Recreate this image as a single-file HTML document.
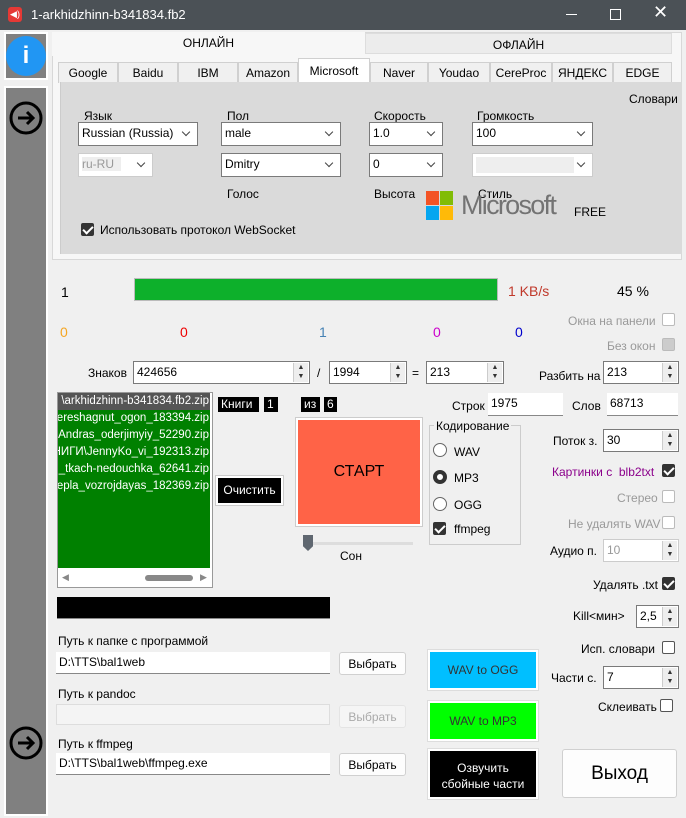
<!DOCTYPE html><html><head><meta charset="utf-8"><style>
*{box-sizing:border-box;margin:0;padding:0}
body{width:686px;height:818px;overflow:hidden;background:#f0f0f0;font-family:"Liberation Sans",sans-serif;font-size:12px;color:#000;position:relative}
.a{position:absolute;white-space:nowrap}
.in{position:absolute;background:#fff;border:1px solid #7a7a7a;padding:3px 3px;font-size:12px}
.cb{position:absolute;width:13px;height:13px;border:1px solid #555;background:#fff;border-radius:2px}
.cb.on{background:#333;border-color:#333}
.cb.on:after{content:"";position:absolute;left:3px;top:0px;width:4px;height:8px;border:solid #fff;border-width:0 2px 2px 0;transform:rotate(45deg)}
.cb.dis{border-color:#bbb}
.dd:after{content:"";position:absolute;right:8px;top:6px;width:5px;height:5px;border:solid #444;border-width:0 1px 1px 0;transform:rotate(45deg)}
.sp:after{content:"▲\A▼";white-space:pre;position:absolute;right:1px;top:1px;font-size:7px;line-height:9px;width:14px;text-align:center;color:#333;background:#eee;border-left:1px solid #ccc;height:calc(100% - 2px)}
.tab{position:absolute;top:62px;height:21px;border:1px solid #d0d0d0;border-bottom:none;background:#f0f0f0;text-align:center;line-height:20px}
.btn{position:absolute;background:#fdfdfd;border:1px solid #d0d0d0;border-radius:3px;text-align:center}
.g{color:#999}
.lst div{display:flex;justify-content:flex-end;overflow:hidden;padding-right:1px}
.lst span{flex:none}
</style></head><body>
<div class="a" style="left:0;top:0;width:686px;height:30px;background:#4b5156"></div>
<div class="a" style="left:8px;top:7px;width:14px;height:15px;background:#e53935;border-radius:3px;color:#fff;font-size:9px;text-align:center;line-height:15px">◀)</div>
<div class="a" style="left:31px;top:7px;color:#fff;font-size:13px">1-arkhidzhinn-b341834.fb2</div>
<div class="a" style="left:566px;top:14px;width:11px;height:1px;background:#fff"></div>
<div class="a" style="left:610px;top:9px;width:11px;height:11px;border:1px solid #fff"></div>
<div class="a" style="left:653px;top:2px;color:#fff;font-size:18px">✕</div>

<div class="a" style="left:4px;top:32px;width:44px;height:48px;background:#808080;border:2px solid #fff"></div>
<div class="a" style="left:6px;top:36px;width:40px;height:40px;background:#2196f3;border-radius:50%;color:#fff;font-weight:bold;font-size:24px;text-align:center;line-height:40px">i</div>
<div class="a" style="left:4px;top:86px;width:44px;height:730px;background:#808080;border:2px solid #fff"></div>
<svg class="a" style="left:8px;top:101px" width="36" height="36"><circle cx="18" cy="17" r="15" fill="none" stroke="#000" stroke-width="3"/><path d="M10 17h15M19 11l6 6-6 6" fill="none" stroke="#000" stroke-width="3"/></svg>
<svg class="a" style="left:8px;top:726px" width="36" height="36"><circle cx="18" cy="17" r="15" fill="none" stroke="#000" stroke-width="3"/><path d="M10 17h15M19 11l6 6-6 6" fill="none" stroke="#000" stroke-width="3"/></svg>

<div class="a" style="left:52px;top:32px;width:630px;height:228px;border:1px solid #d8d8d8;background:#f7f7f7"></div>
<div class="a" style="left:52px;top:32px;width:313px;height:24px;background:#f7f7f7;text-align:center;line-height:22px">ОНЛАЙН</div>
<div class="a" style="left:365px;top:33px;width:307px;height:21px;background:#ececec;border:1px solid #ddd;text-align:center;line-height:22px">ОФЛАЙН</div>
<div class="tab" style="left:58px;width:60px">Google</div>
<div class="tab" style="left:118px;width:60px">Baidu</div>
<div class="tab" style="left:178px;width:60px">IBM</div>
<div class="tab" style="left:238px;width:60px">Amazon</div>
<div class="tab" style="left:298px;top:58px;height:25px;width:72px;background:#fff;line-height:24px">Microsoft</div>
<div class="tab" style="left:370px;width:58px">Naver</div>
<div class="tab" style="left:428px;width:62px">Youdao</div>
<div class="tab" style="left:490px;width:62px">CereProc</div>
<div class="tab" style="left:552px;width:61px">ЯНДЕКС</div>
<div class="tab" style="left:613px;width:59px">EDGE</div>
<div class="a" style="left:60px;top:82px;width:622px;height:172px;background:#dadada;border-left:1px solid #ccc"></div>
<div class="a" style="left:629px;top:92px">Словари</div>
<div class="a" style="left:84px;top:109px">Язык</div><div class="a" style="left:227px;top:109px">Пол</div><div class="a" style="left:374px;top:109px">Скорость</div><div class="a" style="left:477px;top:109px">Громкость</div>
<div class="in dd" style="left:78px;top:122px;width:120px;height:24px">Russian (Russia)</div>
<div class="in dd" style="left:221px;top:122px;width:120px;height:24px">male</div>
<div class="in dd" style="left:369px;top:122px;width:74px;height:24px">1.0</div>
<div class="in dd" style="left:472px;top:122px;width:121px;height:24px">100</div>
<div class="in dd g" style="left:78px;top:153px;width:75px;height:24px;border-color:#ccc"><span style="background:#eee">ru-RU&nbsp;&nbsp;</span></div>
<div class="in dd" style="left:221px;top:153px;width:120px;height:24px">Dmitry</div>
<div class="in dd" style="left:369px;top:153px;width:74px;height:24px">0</div>
<div class="in dd" style="left:472px;top:153px;width:121px;height:24px;border-color:#ccc"><div style="background:#eee;width:98px;height:16px"></div></div>
<div class="a" style="left:227px;top:187px">Голос</div><div class="a" style="left:374px;top:187px">Высота</div><div class="a" style="left:478px;top:187px">Стиль</div>
<div class="a" style="left:426px;top:191px;width:13px;height:14px;background:#f35325"></div><div class="a" style="left:440px;top:191px;width:13px;height:14px;background:#81bc06"></div>
<div class="a" style="left:426px;top:206px;width:13px;height:14px;background:#05a6f0"></div><div class="a" style="left:440px;top:206px;width:13px;height:14px;background:#ffba08"></div>
<div class="a" style="left:461px;top:190px;font-size:27px;color:#737373;letter-spacing:-1.7px">Microsoft</div>
<div class="a" style="left:574px;top:205px">FREE</div>
<div class="cb on" style="left:81px;top:223px"></div><div class="a" style="left:100px;top:223px">Использовать протокол WebSocket</div>

<div class="a" style="left:61px;top:284px;font-size:14px">1</div>
<div class="a" style="left:134px;top:278px;width:364px;height:23px;border:1px solid #bbb;background:#0db02b"></div>
<div class="a" style="left:508px;top:283px;font-size:14px;color:#c0392b">1 KB/s</div>
<div class="a" style="left:617px;top:283px;font-size:14px">45 %</div>
<div class="a" style="left:60px;top:324px;font-size:14px;color:#f5a623">0</div>
<div class="a" style="left:180px;top:324px;font-size:14px;color:#e00">0</div>
<div class="a" style="left:319px;top:324px;font-size:14px;color:#4682b4">1</div>
<div class="a" style="left:433px;top:324px;font-size:14px;color:#c0c">0</div>
<div class="a" style="left:515px;top:324px;font-size:14px;color:#00c">0</div>
<div class="a g" style="left:568px;top:314px">Окна на панели</div><div class="cb dis" style="left:662px;top:313px"></div>
<div class="a g" style="left:607px;top:339px">Без окон</div><div class="cb dis" style="left:662px;top:338px;background:#ccc"></div>
<div class="a" style="left:88px;top:366px">Знаков</div>
<div class="in sp" style="left:133px;top:361px;width:177px;height:23px">424656</div>
<div class="a" style="left:317px;top:366px">/</div>
<div class="in sp" style="left:329px;top:361px;width:78px;height:23px">1994</div>
<div class="a" style="left:412px;top:366px">=</div>
<div class="in sp" style="left:426px;top:361px;width:78px;height:23px">213</div>
<div class="a" style="left:539px;top:369px">Разбить на</div>
<div class="in sp" style="left:603px;top:361px;width:76px;height:23px">213</div>

<div class="a" style="left:57px;top:392px;width:156px;height:196px;border:1px solid #999;background:#fff"></div>
<div class="a lst" style="left:58px;top:393px;width:152px;height:175px;background:#008000;overflow:hidden;color:#fff;line-height:17px;font-size:11.5px">
<div style="background:#555"><span>\arkhidzhinn-b341834.fb2.zip</span></div><div><span>pereshagnut_ogon_183394.zip</span></div><div><span>Andras_oderjimyiy_52290.zip</span></div><div><span>КНИГИ\JennyKo_vi_192313.zip</span></div><div><span>_tkach-nedouchka_62641.zip</span></div><div><span>bepla_vozrojdayas_182369.zip</span></div></div>
<div class="a" style="left:62px;top:572px;color:#888;font-size:9px">◀</div><div class="a" style="left:145px;top:575px;width:48px;height:6px;background:#888;border-radius:3px"></div><div class="a" style="left:200px;top:572px;color:#888;font-size:9px">▶</div>
<div class="a" style="left:218px;top:397px;width:41px;height:15px;background:#000;color:#fff;padding-left:3px;line-height:15px">Книги</div>
<div class="a" style="left:264px;top:397px;width:14px;height:15px;background:#000;color:#fff;padding-left:3px;line-height:15px">1</div>
<div class="a" style="left:301px;top:397px;width:19px;height:15px;background:#000;color:#fff;padding-left:3px;line-height:15px">из</div>
<div class="a" style="left:324px;top:397px;width:13px;height:15px;background:#000;color:#fff;padding-left:3px;line-height:15px">6</div>
<div class="a" style="left:216px;top:476px;width:67px;height:29px;background:#000;border:2px solid #fff;outline:1px solid #ccc;color:#fff;text-align:center;line-height:25px">Очистить</div>
<div class="a" style="left:296px;top:418px;width:126px;height:108px;background:#ff6347;border:2px solid #fff;outline:1px solid #ccc;text-align:center;line-height:104px;font-size:16px">СТАРТ</div>
<div class="a" style="left:313px;top:542px;width:100px;height:3px;background:#ddd"></div>
<div class="a" style="left:303px;top:535px;width:10px;height:16px;background:#5f6770;clip-path:polygon(0 0,100% 0,100% 70%,50% 100%,0 70%)"></div>
<div class="a" style="left:340px;top:549px">Сон</div>
<div class="a" style="left:429px;top:425px;width:92px;height:120px;border:1px solid #ccc"></div>
<div class="a" style="left:434px;top:419px;background:#f0f0f0;padding:0 2px">Кодирование</div>
<div class="a" style="left:433px;top:443px;width:14px;height:14px;border:1px solid #666;border-radius:50%;background:#fff"></div><div class="a" style="left:454px;top:445px">WAV</div>
<div class="a" style="left:433px;top:470px;width:14px;height:14px;border:4px solid #333;border-radius:50%;background:#fff"></div><div class="a" style="left:454px;top:471px">MP3</div>
<div class="a" style="left:433px;top:497px;width:14px;height:14px;border:1px solid #666;border-radius:50%;background:#fff"></div><div class="a" style="left:454px;top:498px">OGG</div>
<div class="cb on" style="left:433px;top:522px"></div><div class="a" style="left:454px;top:522px">ffmpeg</div>
<div class="a" style="left:452px;top:399px">Строк</div><div class="in" style="left:488px;top:393px;width:75px;height:23px;border:none;border-bottom:1px solid #888">1975</div>
<div class="a" style="left:572px;top:399px">Слов</div><div class="in" style="left:607px;top:393px;width:71px;height:23px;border:none;border-bottom:1px solid #888">68713</div>
<div class="a" style="left:553px;top:434px">Поток з.</div><div class="in sp" style="left:603px;top:429px;width:76px;height:23px">30</div>
<div class="a" style="left:552px;top:465px;color:#8b008b">Картинки с&nbsp; blb2txt</div><div class="cb on" style="left:662px;top:464px"></div>
<div class="a g" style="left:617px;top:491px">Стерео</div><div class="cb dis" style="left:662px;top:490px"></div>
<div class="a g" style="left:568px;top:517px">Не удалять WAV</div><div class="cb dis" style="left:662px;top:516px"></div>
<div class="a" style="left:550px;top:544px">Аудио п.</div><div class="in sp g" style="left:603px;top:539px;width:76px;height:23px;border-color:#ccc">10</div>
<div class="a" style="left:593px;top:578px">Удалять .txt</div><div class="cb on" style="left:662px;top:577px"></div>

<div class="a" style="left:57px;top:597px;width:273px;height:22px;background:#000;border-bottom:1px solid #888"></div>
<div class="a" style="left:573px;top:609px">Kill&lt;мин&gt;</div><div class="in sp" style="left:636px;top:605px;width:43px;height:23px">2,5</div>
<div class="a" style="left:58px;top:634px">Путь к папке с программой</div>
<div class="in" style="left:56px;top:652px;width:274px;height:22px;border:none;border-bottom:1px solid #888">D:\TTS\bal1web</div>
<div class="btn" style="left:339px;top:652px;width:67px;height:23px;line-height:22px">Выбрать</div>
<div class="a" style="left:581px;top:642px">Исп. словари</div><div class="cb" style="left:662px;top:641px"></div>
<div class="a" style="left:428px;top:650px;width:110px;height:40px;background:#00bfff;border:2px solid #fff;outline:1px solid #ddd;text-align:center;line-height:36px;color:#333">WAV to OGG</div>
<div class="a" style="left:551px;top:671px">Части с.</div><div class="in sp" style="left:603px;top:666px;width:76px;height:23px">7</div>
<div class="a" style="left:58px;top:687px">Путь к pandoc</div>
<div class="in" style="left:56px;top:704px;width:274px;height:21px;border-color:#ddd;background:#f4f4f4"></div>
<div class="btn g" style="left:339px;top:705px;width:67px;height:23px;line-height:22px;background:#f5f5f5;border-color:#e4e4e4;color:#aaa">Выбрать</div>
<div class="a" style="left:598px;top:700px">Склеивать</div><div class="cb" style="left:660px;top:699px"></div>
<div class="a" style="left:428px;top:701px;width:110px;height:40px;background:#00ff00;border:2px solid #fff;outline:1px solid #ddd;text-align:center;line-height:36px;color:#333">WAV to MP3</div>
<div class="a" style="left:58px;top:737px">Путь к ffmpeg</div>
<div class="in" style="left:56px;top:753px;width:274px;height:22px;border:none;border-bottom:1px solid #888">D:\TTS\bal1web\ffmpeg.exe</div>
<div class="btn" style="left:339px;top:753px;width:67px;height:23px;line-height:22px">Выбрать</div>
<div class="a" style="left:428px;top:749px;width:110px;height:50px;background:#000;border:2px solid #fff;outline:1px solid #ddd;text-align:center;color:#fff;white-space:normal;padding-top:9px;line-height:16px">Озвучить<br>сбойные части</div>
<div class="btn" style="left:562px;top:749px;width:115px;height:49px;line-height:48px;font-size:19px">Выход</div>
</body></html>
